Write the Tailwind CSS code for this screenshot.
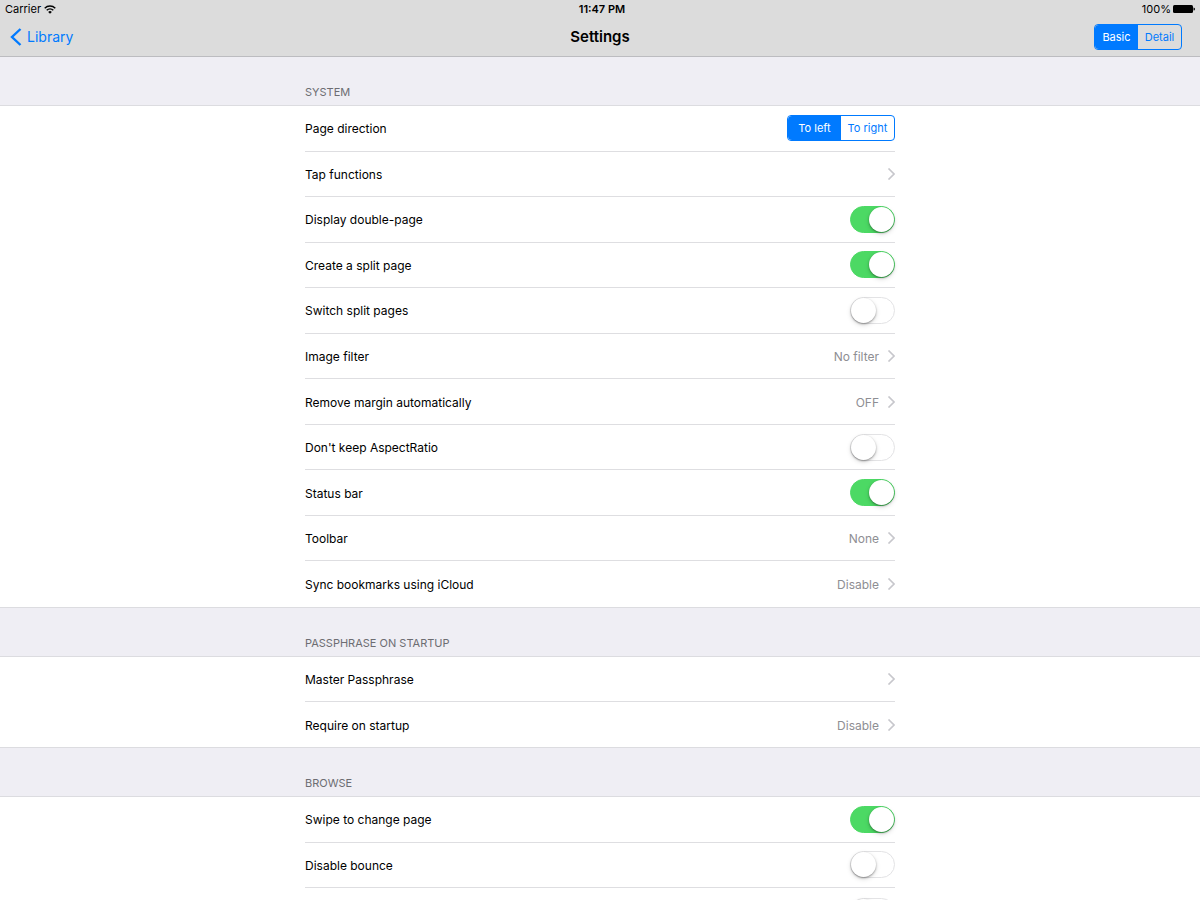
<!DOCTYPE html>
<html lang="en">
<head>
  <meta charset="UTF-8">
  <meta name="viewport" content="width=device-width, initial-scale=1">
  <title>Settings</title>
  <script src="https://cdn.jsdelivr.net/npm/@tailwindcss/browser@4"></script>
</head>
<body class="min-h-screen bg-[#efeef4] font-['Inter','Liberation_Sans',sans-serif] text-xs text-black">
  <!-- Status bar and navigation -->
  <header class="sticky top-0 z-10 border-b border-[#bcbcc0] bg-[#dcdcdc]">
    <div class="grid h-[18px] grid-cols-3 items-center px-[5px] text-[11px]">
      <div class="flex items-center gap-[3px]">
        <span>Carrier</span>
        <svg class="h-[9px] w-3" viewBox="0 0 12 9" fill="none" stroke="#000" stroke-width="1.4">
          <path d="M.7 3.2a7.6 7.6 0 0 1 10.6 0M2.7 5.3a4.7 4.7 0 0 1 6.6 0"/>
          <path d="M6 8.8 4.2 6.9a2.6 2.6 0 0 1 3.6 0z" fill="#000" stroke="none"/>
        </svg>
      </div>
      <time class="pl-1 text-center font-semibold">11:47 PM</time>
      <div class="flex items-center justify-end gap-[2px]">
        <span>100%</span>
        <svg class="h-2 w-[22px]" viewBox="0 0 22 8">
          <rect width="20" height="8" rx="1.5"/>
          <path d="M20.5 2.5a1.5 1.5 0 0 1 0 3z"/>
        </svg>
      </div>
    </div>
    <nav class="grid h-[38px] grid-cols-3 items-center pr-[18px] pl-[10px]">
      <a href="#" class="flex items-center gap-[5px] text-sm text-[#007aff]">
        <svg class="h-[18px] w-3" viewBox="0 0 12 18" fill="none" stroke="currentColor" stroke-width="2.4">
          <path d="M10.5 1 2 9l8.5 8"/>
        </svg>
        Library
      </a>
      <h1 class="pl-2 text-center text-[15px] font-semibold">Settings</h1>
      <fieldset aria-label="View" class="flex justify-self-end overflow-hidden rounded border border-[#007aff] text-[11px] text-[#007aff]">
        <label class="relative flex h-6 w-[43px] cursor-pointer items-center justify-center has-checked:bg-[#007aff] has-checked:text-white">
          <input type="radio" name="view" class="absolute inset-0 cursor-pointer appearance-none" checked>Basic
        </label>
        <label class="relative flex h-6 w-[43px] cursor-pointer items-center justify-center has-checked:bg-[#007aff] has-checked:text-white">
          <input type="radio" name="view" class="absolute inset-0 cursor-pointer appearance-none">Detail
        </label>
      </fieldset>
    </nav>
  </header>

  <main>
    <!-- System -->
    <section>
      <h2 class="mx-auto max-w-[590px] pt-[27px] pb-[5px] text-[11px] leading-4 text-[#6d6d72]">SYSTEM</h2>
      <div class="border-y border-[#dcdce0] bg-white">
        <ul class="mx-auto grid min-h-[501px] max-w-[590px] auto-rows-fr divide-y divide-[#dedee1] [&_li>label]:pt-[2px] [&_span]:pt-[2px]">
          <li class="flex items-center justify-between">
            <span>Page direction</span>
            <fieldset aria-label="Page direction" class="flex overflow-hidden rounded border border-[#007aff] text-[11px] text-[#007aff]">
              <label class="relative flex h-6 w-[53px] cursor-pointer items-center justify-center has-checked:bg-[#007aff] has-checked:text-white">
                <input type="radio" name="direction" class="absolute inset-0 cursor-pointer appearance-none" checked>To left
              </label>
              <label class="relative flex h-6 w-[53px] cursor-pointer items-center justify-center has-checked:bg-[#007aff] has-checked:text-white">
                <input type="radio" name="direction" class="absolute inset-0 cursor-pointer appearance-none">To right
              </label>
            </fieldset>
          </li>
          <li class="flex">
            <a href="#" class="flex flex-1 items-center justify-between">
              <span>Tap functions</span>
              <svg class="h-3 w-2" viewBox="0 0 8 12" fill="none" stroke="#c7c7cc" stroke-width="1.6"><path d="M1.5.5 7 6l-5.5 5.5"/></svg>
            </a>
          </li>
          <li class="flex items-center justify-between">
            <label for="double">Display double-page</label>
            <input id="double" type="checkbox" role="switch" checked class="flex h-[27px] w-[45px] cursor-pointer appearance-none items-center rounded-full border border-[#e3e3e5] bg-white before:size-[25px] before:rounded-full before:bg-white before:shadow-[0_1px_2px_rgba(0,0,0,0.35),0_2px_5px_rgba(0,0,0,0.15)] checked:justify-end checked:border-[#4cd964] checked:bg-[#4cd964]">
          </li>
          <li class="flex items-center justify-between">
            <label for="split">Create a split page</label>
            <input id="split" type="checkbox" role="switch" checked class="flex h-[27px] w-[45px] cursor-pointer appearance-none items-center rounded-full border border-[#e3e3e5] bg-white before:size-[25px] before:rounded-full before:bg-white before:shadow-[0_1px_2px_rgba(0,0,0,0.35),0_2px_5px_rgba(0,0,0,0.15)] checked:justify-end checked:border-[#4cd964] checked:bg-[#4cd964]">
          </li>
          <li class="flex items-center justify-between">
            <label for="switch-split">Switch split pages</label>
            <input id="switch-split" type="checkbox" role="switch" class="flex h-[27px] w-[45px] cursor-pointer appearance-none items-center rounded-full border border-[#e3e3e5] bg-white before:size-[25px] before:rounded-full before:bg-white before:shadow-[0_1px_2px_rgba(0,0,0,0.35),0_2px_5px_rgba(0,0,0,0.15)] checked:justify-end checked:border-[#4cd964] checked:bg-[#4cd964]">
          </li>
          <li class="flex">
            <a href="#" class="flex flex-1 items-center gap-2">
              <span class="flex-1">Image filter</span>
              <span class="text-[#8e8e93]">No filter</span>
              <svg class="h-3 w-2" viewBox="0 0 8 12" fill="none" stroke="#c7c7cc" stroke-width="1.6"><path d="M1.5.5 7 6l-5.5 5.5"/></svg>
            </a>
          </li>
          <li class="flex">
            <a href="#" class="flex flex-1 items-center gap-2">
              <span class="flex-1">Remove margin automatically</span>
              <span class="text-[#8e8e93]">OFF</span>
              <svg class="h-3 w-2" viewBox="0 0 8 12" fill="none" stroke="#c7c7cc" stroke-width="1.6"><path d="M1.5.5 7 6l-5.5 5.5"/></svg>
            </a>
          </li>
          <li class="flex items-center justify-between">
            <label for="aspect">Don't keep AspectRatio</label>
            <input id="aspect" type="checkbox" role="switch" class="flex h-[27px] w-[45px] cursor-pointer appearance-none items-center rounded-full border border-[#e3e3e5] bg-white before:size-[25px] before:rounded-full before:bg-white before:shadow-[0_1px_2px_rgba(0,0,0,0.35),0_2px_5px_rgba(0,0,0,0.15)] checked:justify-end checked:border-[#4cd964] checked:bg-[#4cd964]">
          </li>
          <li class="flex items-center justify-between">
            <label for="status">Status bar</label>
            <input id="status" type="checkbox" role="switch" checked class="flex h-[27px] w-[45px] cursor-pointer appearance-none items-center rounded-full border border-[#e3e3e5] bg-white before:size-[25px] before:rounded-full before:bg-white before:shadow-[0_1px_2px_rgba(0,0,0,0.35),0_2px_5px_rgba(0,0,0,0.15)] checked:justify-end checked:border-[#4cd964] checked:bg-[#4cd964]">
          </li>
          <li class="flex">
            <a href="#" class="flex flex-1 items-center gap-2">
              <span class="flex-1">Toolbar</span>
              <span class="text-[#8e8e93]">None</span>
              <svg class="h-3 w-2" viewBox="0 0 8 12" fill="none" stroke="#c7c7cc" stroke-width="1.6"><path d="M1.5.5 7 6l-5.5 5.5"/></svg>
            </a>
          </li>
          <li class="flex">
            <a href="#" class="flex flex-1 items-center gap-2">
              <span class="flex-1">Sync bookmarks using iCloud</span>
              <span class="text-[#8e8e93]">Disable</span>
              <svg class="h-3 w-2" viewBox="0 0 8 12" fill="none" stroke="#c7c7cc" stroke-width="1.6"><path d="M1.5.5 7 6l-5.5 5.5"/></svg>
            </a>
          </li>
        </ul>
      </div>
    </section>

    <!-- Passphrase -->
    <section>
      <h2 class="mx-auto max-w-[590px] pt-[27px] pb-[5px] text-[11px] leading-4 text-[#6d6d72]">PASSPHRASE ON STARTUP</h2>
      <div class="border-y border-[#dcdce0] bg-white">
        <ul class="mx-auto grid min-h-[90px] max-w-[590px] auto-rows-fr divide-y divide-[#dedee1] [&_li>label]:pt-[2px] [&_span]:pt-[2px]">
          <li class="flex">
            <a href="#" class="flex flex-1 items-center justify-between">
              <span>Master Passphrase</span>
              <svg class="h-3 w-2" viewBox="0 0 8 12" fill="none" stroke="#c7c7cc" stroke-width="1.6"><path d="M1.5.5 7 6l-5.5 5.5"/></svg>
            </a>
          </li>
          <li class="flex">
            <a href="#" class="flex flex-1 items-center gap-2">
              <span class="flex-1">Require on startup</span>
              <span class="text-[#8e8e93]">Disable</span>
              <svg class="h-3 w-2" viewBox="0 0 8 12" fill="none" stroke="#c7c7cc" stroke-width="1.6"><path d="M1.5.5 7 6l-5.5 5.5"/></svg>
            </a>
          </li>
        </ul>
      </div>
    </section>

    <!-- Browse -->
    <section>
      <h2 class="mx-auto max-w-[590px] pt-[27px] pb-[5px] text-[11px] leading-4 text-[#6d6d72]">BROWSE</h2>
      <div class="border-y border-[#dcdce0] bg-white">
        <ul class="mx-auto grid min-h-[137px] max-w-[590px] auto-rows-fr divide-y divide-[#dedee1] [&_li>label]:pt-[2px] [&_span]:pt-[2px]">
          <li class="flex items-center justify-between">
            <label for="swipe">Swipe to change page</label>
            <input id="swipe" type="checkbox" role="switch" checked class="flex h-[27px] w-[45px] cursor-pointer appearance-none items-center rounded-full border border-[#e3e3e5] bg-white before:size-[25px] before:rounded-full before:bg-white before:shadow-[0_1px_2px_rgba(0,0,0,0.35),0_2px_5px_rgba(0,0,0,0.15)] checked:justify-end checked:border-[#4cd964] checked:bg-[#4cd964]">
          </li>
          <li class="flex items-center justify-between">
            <label for="bounce">Disable bounce</label>
            <input id="bounce" type="checkbox" role="switch" class="flex h-[27px] w-[45px] cursor-pointer appearance-none items-center rounded-full border border-[#e3e3e5] bg-white before:size-[25px] before:rounded-full before:bg-white before:shadow-[0_1px_2px_rgba(0,0,0,0.35),0_2px_5px_rgba(0,0,0,0.15)] checked:justify-end checked:border-[#4cd964] checked:bg-[#4cd964]">
          </li>
          <li class="flex items-center justify-between">
            <input type="checkbox" role="switch" aria-label="Browse option" class="ml-auto flex h-[27px] w-[45px] cursor-pointer appearance-none items-center rounded-full border border-[#e3e3e5] bg-white before:size-[25px] before:rounded-full before:bg-white before:shadow-[0_1px_2px_rgba(0,0,0,0.35),0_2px_5px_rgba(0,0,0,0.15)] checked:justify-end checked:border-[#4cd964] checked:bg-[#4cd964]">
          </li>
        </ul>
      </div>
    </section>
  </main>
</body>
</html>
